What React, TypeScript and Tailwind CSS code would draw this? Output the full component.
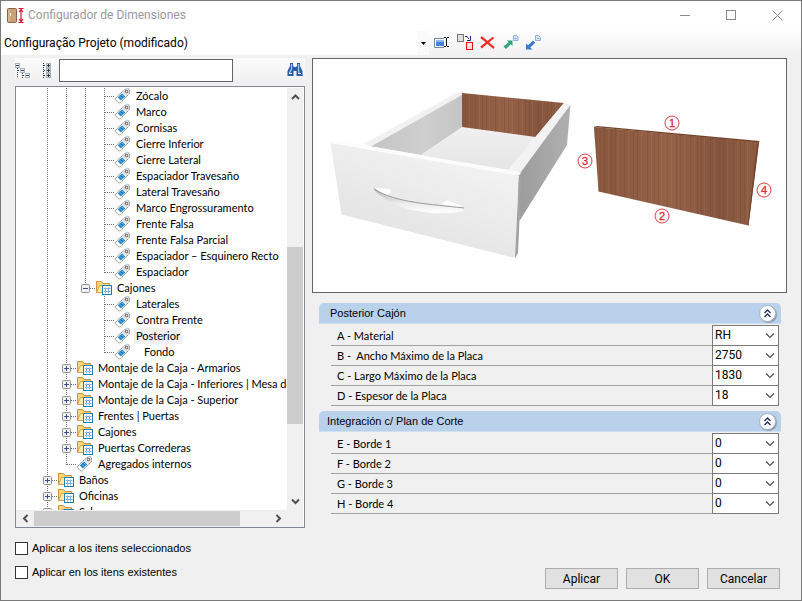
import { useId } from "react";
import type { ReactNode } from "react";

type Cell = "line" | "tee" | "end" | "blank" | "plus" | "minus";

type TreeRow = {
  cells: Cell[];
  icon: "tag" | "folder";
  label: string;
  selected?: boolean;
  indented?: boolean;
};

const cabinetParts = [
  "Zócalo",
  "Marco",
  "Cornisas",
  "Cierre Inferior",
  "Cierre Lateral",
  "Espaciador Travesaño",
  "Lateral Travesaño",
  "Marco Engrossuramento",
  "Frente Falsa",
  "Frente Falsa Parcial",
  "Espaciador – Esquinero Recto",
];

const rows: TreeRow[] = [
  ...cabinetParts.map((label): TreeRow => ({ cells: ["line", "line", "line", "tee"], icon: "tag", label })),
  { cells: ["line", "line", "line", "end"], icon: "tag", label: "Espaciador" },
  { cells: ["line", "line", "minus"], icon: "folder", label: "Cajones" },
  { cells: ["line", "line", "blank", "tee"], icon: "tag", label: "Laterales" },
  { cells: ["line", "line", "blank", "tee"], icon: "tag", label: "Contra Frente" },
  { cells: ["line", "line", "blank", "tee"], icon: "tag", label: "Posterior", selected: true },
  { cells: ["line", "line", "blank", "end"], icon: "tag", label: "Fondo", indented: true },
  { cells: ["line", "plus"], icon: "folder", label: "Montaje de la Caja - Armarios" },
  { cells: ["line", "plus"], icon: "folder", label: "Montaje de la Caja - Inferiores | Mesa de" },
  { cells: ["line", "plus"], icon: "folder", label: "Montaje de la Caja - Superior" },
  { cells: ["line", "plus"], icon: "folder", label: "Frentes | Puertas" },
  { cells: ["line", "plus"], icon: "folder", label: "Cajones" },
  { cells: ["line", "plus"], icon: "folder", label: "Puertas Correderas" },
  { cells: ["line", "end"], icon: "tag", label: "Agregados internos" },
  { cells: ["plus"], icon: "folder", label: "Baños" },
  { cells: ["plus"], icon: "folder", label: "Oficinas" },
  { cells: ["plus"], icon: "folder", label: "Salas" },
];

function Connector({ kind }: { kind: Cell }) {
  const boxed = kind === "plus" || kind === "minus";
  const bottom = kind === "end" || kind === "minus" ? 9 : 16;
  return (
    <svg width="19" height="16" className="shrink-0" aria-hidden="true">
      {kind !== "blank" && (
        <path d={`M9.5 0V${bottom}`} stroke="#707070" strokeDasharray="1 1" shapeRendering="crispEdges" />
      )}
      {kind !== "blank" && kind !== "line" && (
        <path d="M10 8.5H19" stroke="#707070" strokeDasharray="1 1" shapeRendering="crispEdges" />
      )}
      {boxed && (
        <>
          <rect x="5.5" y="4.5" width="8" height="8" rx="1" fill="#f1f1f1" stroke="#8f8f8f" />
          <path d={kind === "minus" ? "M7 8.5H12" : "M7 8.5H12M9.5 6V11"} stroke="#3b4f9c" />
        </>
      )}
    </svg>
  );
}

function TagIcon() {
  return (
    <svg width="20" height="16" className="shrink-0" aria-hidden="true">
      <path d="M1.5 10.5L9.5 2.5L10.5 1.5L14 0.8L15.5 1.5V5.5L6.5 14.5L5 15.2L1.5 12Z" fill="#fff" stroke="#858585" strokeDasharray="2 0.6" />
      <path d="M9.5 3L11 2L14 1.3L15 2.2V5.3L12.5 7.8L8 4.5Z" fill="#dcdcdc" />
      <path d="M8 5.3L11.3 8.5L6.8 12.5L3.8 9.5Z" fill="#1f86cc" />
      <path d="M6 8.5L8 10.5M7.5 6.5L9.5 8.5" stroke="#6dbdf0" />
      <rect x="11.5" y="2.5" width="2" height="2" fill="#fff" stroke="#858585" />
    </svg>
  );
}

function FolderIcon() {
  return (
    <svg width="20" height="16" className="shrink-0" aria-hidden="true">
      <path d="M1.5 12.5V1.5H6.5L8 3.5H14.5V12.5Z" fill="#fad77c" stroke="#cf933a" />
      <path d="M4.5 5.5H15.5V12.5H1.5Z" fill="#fdebad" stroke="#d89f45" />
      <rect x="7.5" y="5.5" width="9" height="9" fill="#fff" stroke="#1b7fb8" />
      <path d="M9 8.5H15.5M9 11.5H15.5M10.5 7.5V13.5M13.5 7.5V13.5" stroke="#7fb2dc" />
    </svg>
  );
}

function Chevron({ dir }: { dir: "up" | "down" | "left" | "right" }) {
  const d = {
    up: "M1 7L4.5 3.5L8 7",
    down: "M1 2.5L4.5 6L8 2.5",
    left: "M6.5 1L3 4.5L6.5 8",
    right: "M2.5 1L6 4.5L2.5 8",
  }[dir];
  return (
    <svg width="9" height="9" aria-hidden="true">
      <path d={d} fill="none" stroke="#505050" strokeWidth="2" />
    </svg>
  );
}

function Tree() {
  return (
    <div className="flex h-[442px] flex-col border border-[#828790] bg-white pt-px">
      <div className="flex min-h-0 flex-1">
        <ul
          className="min-w-0 flex-1 overflow-hidden pl-[22px] font-['Lato','Liberation_Sans',sans-serif]"
          aria-label="Configuraciones"
        >
          {rows.map((row, i) => (
            <li key={i} className="flex h-4 items-center whitespace-nowrap">
              {row.cells.map((c, j) => (
                <Connector key={j} kind={c} />
              ))}
              {row.icon === "tag" ? <TagIcon /> : <FolderIcon />}
              {row.indented && <span className="w-2 shrink-0" />}
              <span className={row.selected ? "bg-[#f0f0f0] px-0.5 leading-4" : "pl-0.5 leading-4"}>{row.label}</span>
            </li>
          ))}
        </ul>
        <div className="flex w-4 flex-col items-center bg-[#f0f0f0]">
          <button type="button" aria-label="Subir" className="flex h-4 w-4 items-center justify-center">
            <Chevron dir="up" />
          </button>
          <div className="h-[143px] shrink-0" />
          <div className="h-[177px] w-full shrink-0 bg-[#cdcdcd]" />
          <div className="flex-1" />
          <button type="button" aria-label="Bajar" className="flex h-[18px] w-4 items-center justify-center">
            <Chevron dir="down" />
          </button>
        </div>
        <div className="w-px bg-white" />
      </div>
      <div className="mr-px flex h-[17px] items-center bg-[#f0f0f0] pr-4">
        <button type="button" aria-label="Izquierda" className="flex h-4 w-[18px] items-center justify-center">
          <Chevron dir="left" />
        </button>
        <div className="h-[15px] w-[206px] bg-[#cdcdcd]" />
        <div className="flex-1" />
        <button type="button" aria-label="Derecha" className="flex h-4 w-[18px] items-center justify-center">
          <Chevron dir="right" />
        </button>
      </div>
    </div>
  );
}

function ToolButton({ label, children }: { label: string; children: ReactNode }) {
  return (
    <button type="button" aria-label={label} className="flex h-[22px] w-[23px] items-center justify-center">
      <svg width="17" height="17" aria-hidden="true">
        {children}
      </svg>
    </button>
  );
}

function TopBar() {
  return (
    <div className="flex h-[27px] items-start bg-linear-to-b from-[#fdfdfd] to-[#f0f0f0]">
      <label className="relative block h-6 w-[428px] bg-white">
        <select
          aria-label="Configuração"
          className="h-full w-full appearance-none bg-transparent pl-[3px] font-['Roboto','Noto_Sans',sans-serif] text-[12px] outline-none"
        >
          <option>Configuração Projeto (modificado)</option>
        </select>
        <span className="pointer-events-none absolute inset-y-0 right-0 flex w-3 items-center justify-center bg-[#fafafa]">
          <svg width="5" height="3" aria-hidden="true">
            <path d="M0 0H5L2.5 3Z" fill="#000" />
          </svg>
        </span>
      </label>
      <div className="ml-px flex">
        <ToolButton label="Renombrar">
          <path d="M11 4.5H1.5V13.5H11" fill="none" stroke="#7c8796" />
          <rect x="3" y="6" width="8" height="6" fill="#8fbaf4" />
          <rect x="3" y="8" width="8" height="4" fill="#4a80dc" />
          <path d="M11 3.5H13M14 3.5H16M13.5 4V12M11 12.5H13M14 12.5H16" stroke="#111" fill="none" />
        </ToolButton>
        <ToolButton label="Duplicar">
          <rect x="1.5" y="0.5" width="6" height="7" fill="#dedede" stroke="#777" />
          <rect x="10.5" y="8.5" width="6" height="7" fill="#f5e5e5" stroke="#e81010" />
          <path d="M9 2.5H11L13 5M14.5 2V6.5H11" fill="none" stroke="#17277d" />
        </ToolButton>
        <ToolButton label="Eliminar">
          <path d="M2 3C6 6 11 11 15 14M14.5 3.5C10 7 6 10.5 2 13.5" fill="none" stroke="#ee2a24" strokeWidth="2.2" />
        </ToolButton>
        <ToolButton label="Exportar">
          <path d="M5 6.5H10.500V12L8.700 10.300L4 15L1.500 12.500L6.500 8.200Z" fill="#2fa37c" />
          <path d="M11.500 1.500H14.500L16 3V6.500H11.500Z" fill="#d6e5fb" stroke="#8db0e6" />
          <path d="M12.500 4.500H15" stroke="#8db0e6" />
        </ToolButton>
        <ToolButton label="Importar">
          <path d="M1 15.500V9.500L3 11.300L8 6.500L10.200 8.700L5.300 13.400L7.500 15.500Z" fill="#3b7bd0" />
          <path d="M10.500 1.500H13.500L15.500 3.500V6.500H10.500Z" fill="#d6e5fb" stroke="#8db0e6" />
          <path d="M12 4.500H14.500" stroke="#8db0e6" />
        </ToolButton>
      </div>
    </div>
  );
}

function FilterBar() {
  return (
    <div className="flex h-6 items-center bg-linear-to-b from-[#fcfcfc] to-[#f0f0f0]">
      <button type="button" aria-label="Contraer todo" className="flex w-4 justify-center">
        <svg width="16" height="17" shapeRendering="crispEdges" aria-hidden="true">
          <path d="M2.500 6V16M3 8.500H5M7.500 11V16M8 13.500H10" stroke="#444" strokeDasharray="1 1" />
          <path d="M0.500 1.500H4.500V5.500H0.500ZM5.500 6.500H9.500V10.500H5.500ZM10.500 11.500H14.500V15.500H10.500Z" fill="#eef3f8" stroke="#a3b2c2" />
          <path d="M1 3.500H4M6 8.500H9M11 13.500H14" stroke="#444" />
        </svg>
      </button>
      <button type="button" aria-label="Expandir todo" className="ml-[10px] mr-px flex w-[10px] justify-center">
        <svg width="9" height="17" shapeRendering="crispEdges" aria-hidden="true">
          <path d="M1.500 1V16M2 3.500H4M2 8.500H4M2 13.500H4" stroke="#333" strokeDasharray="1 1" />
          <path d="M4.500 1.500H8.500V5.500H4.500ZM4.500 6.500H8.500V10.500H4.500ZM4.500 11.500H8.500V15.500H4.500Z" fill="#e9eef3" stroke="#a3b2c2" />
          <path d="M5 3.500H8M5 8.500H8M5 13.500H8M6.500 2V5M6.500 7V10M6.500 12V15" stroke="#333" />
        </svg>
      </button>
      <input
        type="text"
        aria-label="Buscar"
        className="ml-[7px] h-[23px] w-[174px] border border-[#646464] bg-white px-1 outline-none"
      />
      <div className="flex-1" />
      <button type="button" aria-label="Buscar siguiente" className="mr-0.5 flex">
        <svg width="16" height="16" aria-hidden="true">
          <path d="M3 1H6V4L7 5H9L10 4V1H13V4L15.500 9V14H9.500V9H6.500V14H0.500V9L3 4Z" fill="#2a5cac" />
          <path d="M4.500 2V7L2.500 11M11.500 2V7L12 11" stroke="#a8cdf7" strokeWidth="1.200" fill="none" />
          <path d="M2 11.500H5M11 11.500H14" stroke="#e4f0ff" />
        </svg>
      </button>
    </div>
  );
}

const marks = [
  { n: "1", x: 672, y: 123 },
  { n: "2", x: 662, y: 216 },
  { n: "3", x: 585, y: 161 },
  { n: "4", x: 764, y: 190 },
];

function DrawerDrawing() {
  return (
    <svg viewBox="313 59 473 233" className="block h-[233px] w-full" role="img" aria-label="Cajón">
      <defs>
        <linearGradient id="front" x1="0" y1="1" x2="0.6" y2="0">
          <stop offset="0" stopColor="#dedede" />
          <stop offset="1" stopColor="#f3f3f3" />
        </linearGradient>
        <linearGradient id="side" x1="0" y1="0" x2="1" y2="0">
          <stop offset="0" stopColor="#9c9c9c" />
          <stop offset="1" stopColor="#b0b0b0" />
        </linearGradient>
        <linearGradient id="inner" x1="0" y1="0" x2="1" y2="0">
          <stop offset="0" stopColor="#c4c4c4" />
          <stop offset="0.6" stopColor="#cfcfcf" />
          <stop offset="1" stopColor="#c4c4c4" />
        </linearGradient>
        <linearGradient id="floor" x1="0" y1="0" x2="0" y2="1">
          <stop offset="0" stopColor="#f0f0f0" />
          <stop offset="1" stopColor="#e5e5e5" />
        </linearGradient>
        <linearGradient id="tone" x1="0" y1="0" x2="1" y2="0">
          <stop offset="0" stopColor="#87563d" />
          <stop offset="0.45" stopColor="#956248" />
          <stop offset="0.75" stopColor="#85553d" />
          <stop offset="1" stopColor="#8f5e45" />
        </linearGradient>
        <linearGradient id="grip" x1="0" y1="0" x2="0" y2="1">
          <stop offset="0" stopColor="#b0b0b0" />
          <stop offset="0.6" stopColor="#ececec" />
          <stop offset="1" stopColor="#ffffff" />
        </linearGradient>
        <pattern id="grain" width="43" height="300" patternUnits="userSpaceOnUse">
          <path d="M2.5 0V300M9.5 0V300M13.5 0V300M22.5 0V300M31.5 0V300M35.5 0V300" stroke="#6f4129" strokeOpacity="0.28" />
          <path d="M6.5 0V300M16.5 0V300M26.5 0V300M39.5 0V300" stroke="#ad7c5c" strokeOpacity="0.25" />
        </pattern>
      </defs>
      <path d="M462 127L535 137L510 170L420 156Z" fill="url(#floor)" />
      <path d="M462 93V127L421 155L369 146Z" fill="url(#inner)" />
      <path d="M462 93L564 103L535.5 137L462 127Z" fill="url(#tone)" />
      <path d="M462 93L564 103L535.5 137L462 127Z" fill="url(#grain)" />
      <path d="M457 92.5L462 93.5V95L371 146.5L363.5 144Z" fill="#f1f1f1" />
      <path d="M570.5 104.5L567 145L519.5 221L517 174Z" fill="url(#side)" />
      <path d="M563.5 103.5L570.5 104.5L521 172L507 171Z" fill="#f2f2f2" />
      <path d="M330.5 143L519 175.5L515 258L341.5 214.5Z" fill="url(#front)" />
      <path d="M330.5 143L335.5 140.5L521.5 172.5L519 175.5Z" fill="#fcfcfc" />
      <path d="M519 175.5L521.5 173L518 253L515 258Z" fill="#a2a2a2" />
      <path d="M376 188L390 189L391 193L384 196ZM441 204L447 200L462 206L460 209Z" fill="#fdfdfd" />
      <path d="M374 188.5C396 204 430 205 464 207.5L463 211C440 216 398 214 374 190Z" fill="url(#grip)" />
      <path d="M374 189C396 203 430 204 464 208" fill="none" stroke="#9a9a9a" />
      <path d="M594 127L759 142L748.5 225.5L598.5 191.5Z" fill="url(#tone)" />
      <path d="M594 127L759 142L748.5 225.5L598.5 191.5Z" fill="url(#grain)" />
      <path d="M593.5 127L597 126L759.5 141L759 142.5Z" fill="#74452e" />
      <path d="M759 142L748.5 225.5L747.5 225L757 144Z" fill="#74452e" />
      {marks.map((m) => (
        <g key={m.n}>
          <circle cx={m.x} cy={m.y} r="7" fill="#fff" stroke="#e0393e" />
          <text
            x={m.x}
            y={m.y + 4}
            textAnchor="middle"
            fill="#dd2a30"
            stroke="#dd2a30"
            strokeWidth="0.3"
            className="font-['Liberation_Sans',Arial,sans-serif] text-[11px]"
          >
            {m.n}
          </text>
        </g>
      ))}
    </svg>
  );
}

function Field({ label, value }: { label: string; value: string }) {
  const id = useId();
  return (
    <div className="flex h-5">
      <label
        htmlFor={id}
        className="flex-1 border-b border-[#a0a0a0] pl-1.5 font-['Lato','Liberation_Sans',sans-serif] leading-5 whitespace-pre"
      >
        {label}
      </label>
      <div className="relative -mt-px h-[21px] w-[67px] border border-[#7a7a7a] bg-white">
        <select
          id={id}
          className="block h-[18px] w-full appearance-none bg-transparent pl-0.5 font-['Roboto','Liberation_Sans',sans-serif] text-[12px] outline-none"
        >
          <option>{value}</option>
        </select>
        <svg width="10" height="6" className="pointer-events-none absolute top-[7px] right-[3px]" aria-hidden="true">
          <path d="M1 0.5L5 4.5L9 0.5" fill="none" stroke="#505050" strokeWidth="1.2" />
        </svg>
      </div>
    </div>
  );
}

function Group({ title, inset, fields }: { title: string; inset: string; fields: [string, string][] }) {
  return (
    <section>
      <h2 className={`flex h-[21px] items-center justify-between rounded-t-[5px] border-b border-[#cfe0f0] bg-[#b9d1ea] pr-[5px] ${inset}`}>
        {title}
        <button
          type="button"
          aria-label="Contraer grupo"
          className="flex h-[17px] w-[17px] items-center justify-center rounded-full border border-[#a9b4c4] bg-white shadow-[1px_1px_1px_#8a99ad]"
        >
          <svg width="9" height="9" aria-hidden="true">
            <path d="M1.5 4L4.5 1L7.5 4M1.5 8L4.5 5L7.5 8" fill="none" stroke="#1f2f5c" strokeWidth="1.4" />
          </svg>
        </button>
      </h2>
      <div className="mr-0.5 ml-3 pt-0.5">
        {fields.map(([label, value]) => (
          <Field key={label} label={label} value={value} />
        ))}
      </div>
    </section>
  );
}

function Check({ label }: { label: string }) {
  return (
    <label className="flex h-6 items-center gap-1">
      <input type="checkbox" className="h-[13px] w-[13px] appearance-none border border-[#333] bg-white checked:bg-[#333]" />
      {label}
    </label>
  );
}

function PushButton({ children }: { children: ReactNode }) {
  return (
    <button
      type="button"
      className="h-[21px] w-[73px] border border-[#adadad] bg-[#e1e1e1] font-['Roboto','Liberation_Sans',sans-serif] text-[12px] leading-none"
    >
      {children}
    </button>
  );
}

export default function App() {
  return (
    <main className="flex min-h-screen w-full flex-col border border-[#7a7a7a] bg-[#f0f0f0] font-['Liberation_Sans',Arial,sans-serif] text-[11px] text-black">
      <header className="flex h-[30px] items-center bg-white pr-px pb-0.5 pl-1.5">
        <svg width="18" height="17" aria-hidden="true">
          <rect x="0.5" y="1.5" width="9" height="14" rx="1" fill="#c9a27a" stroke="#8a6444" />
          <path d="M2 3V14" stroke="#e7cfae" />
          <path d="M3.5 6V9" stroke="#f4f4f4" />
          <path d="M11.5 1.5H16.5M11.5 15.5H16.5M14 2V15M12 5L14 2.5L16 5M12 12L14 14.5L16 12" fill="none" stroke="#d8142c" strokeWidth="1.2" />
        </svg>
        <h1 className="ml-[3px] flex-1 font-['Roboto','Noto_Sans',sans-serif] text-[12px] text-[#999]">
          Configurador de Dimensiones
        </h1>
        <button type="button" aria-label="Minimizar" className="flex h-full w-[46px] items-center justify-center">
          <svg width="11" height="11" aria-hidden="true">
            <path d="M0 5.5H10" stroke="#8a8a8a" />
          </svg>
        </button>
        <button type="button" aria-label="Maximizar" className="flex h-full w-[46px] items-center justify-center">
          <svg width="11" height="11" aria-hidden="true">
            <rect x="0.5" y="0.5" width="9" height="9" fill="none" stroke="#8a8a8a" />
          </svg>
        </button>
        <button type="button" aria-label="Cerrar" className="flex h-full w-[46px] items-center justify-center">
          <svg width="11" height="11" aria-hidden="true">
            <path d="M0.5 0.5L10.5 10.5M10.5 0.5L0.5 10.5" stroke="#8a8a8a" />
          </svg>
        </button>
      </header>
      <TopBar />
      <div className="flex items-start gap-[7px] pr-3.5 pl-3.5">
        <div className="w-[290px] shrink-0">
          <FilterBar />
          <div className="mt-1">
            <Tree />
          </div>
        </div>
        <div className="min-w-0 flex-1">
          <div className="border border-[#646464] bg-white">
            <DrawerDrawing />
          </div>
          <div className="flex flex-col gap-[5px] pt-[10px] pr-1.5 pl-[7px]">
            <Group
              title="Posterior Cajón"
              inset="pl-[11px]"
              fields={[
                ["A - Material", "RH"],
                ["B -  Ancho Máximo de la Placa", "2750"],
                ["C - Largo Máximo de la Placa", "1830"],
                ["D - Espesor de la Placa", "18"],
              ]}
            />
            <Group
              title="Integración c/ Plan de Corte"
              inset="pl-2"
              fields={[
                ["E - Borde 1", "0"],
                ["F - Borde 2", "0"],
                ["G - Borde 3", "0"],
                ["H - Borde 4", "0"],
              ]}
            />
          </div>
        </div>
      </div>
      <footer className="flex flex-1 items-end justify-between pr-[21px] pb-[11px] pl-3.5">
        <div className="flex flex-col self-start pt-2">
          <Check label="Aplicar a los itens seleccionados" />
          <Check label="Aplicar en los itens existentes" />
        </div>
        <div className="flex gap-2">
          <PushButton>Aplicar</PushButton>
          <PushButton>OK</PushButton>
          <PushButton>Cancelar</PushButton>
        </div>
      </footer>
    </main>
  );
}
